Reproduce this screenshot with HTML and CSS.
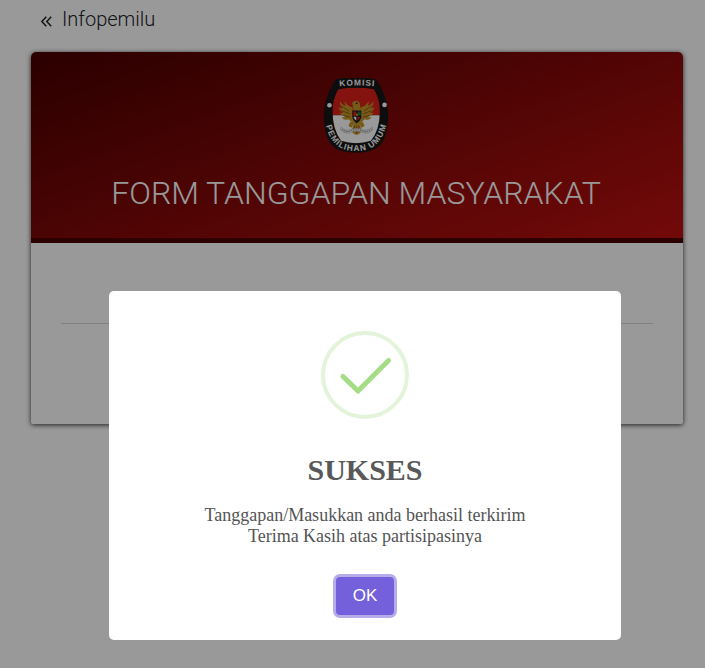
FILE: index.html
```html
<!DOCTYPE html>
<html lang="id">
<head>
<meta charset="utf-8">
<meta name="viewport" content="width=device-width, initial-scale=1">
<title>Form Tanggapan Masyarakat</title>
<link rel="stylesheet" href="styles.css">
</head>
<body>
<div class="page">
  <nav class="topbar">
    <a class="back" href="#">
      <svg class="back-icon" viewBox="0 0 11 11" aria-hidden="true"><path d="M5.3.8.9 5.5l4.4 4.7M10.2.8 5.8 5.5l4.4 4.7"/></svg>
      <span>Infopemilu</span>
    </a>
  </nav>
  <main class="card">
    <header class="card-header">
      <svg class="logo" viewBox="38 24 196 226" role="img" aria-label="Komisi Pemilihan Umum">
        <defs>
          <path id="arc-top" d="M70 51Q138 42 210 51"/>
          <path id="arc-bottom" d="M41 146C52 214 80 244 136 244S220 214 233 142"/>
          <clipPath id="shield"><path d="M83 58Q136 49 190 58Q208 88 208 125Q208 180 181 213Q136 228 91 213Q66 180 65 125Q65 88 83 58Z"/></clipPath>
        </defs>
        <path class="ink" d="M82 26Q136 20 190 26Q199 28 205 40Q234 92 233 142Q231 207 203 232Q181 249 136 249T69 232Q41 207 39 142Q38 92 67 40Q73 28 82 26Z"/>
        <g clip-path="url(#shield)">
          <path class="red" d="M60 45h155v91H60z"/>
          <path class="white" d="M60 136h155v95H60z"/>
        </g>
        <circle class="white" cx="56" cy="106" r="7"/>
        <circle class="white" cx="222" cy="105" r="7"/>
        <g class="gold">
          <path d="M126 113Q109 108 102 94Q101 103 105 109Q94 105 87 94Q87 107 95 116Q88 117 84 111Q87 126 98 128Q91 131 87 127Q92 140 104 139Q98 144 93 142Q101 154 113 148L126 158Z"/>
          <path d="M150 113Q167 108 174 94Q175 103 171 109Q182 105 189 94Q189 107 181 116Q188 117 192 111Q189 126 178 128Q185 131 189 127Q184 140 172 139Q178 144 183 142Q175 154 163 148L150 158Z"/>
          <path d="M128 120Q127 105 124 100Q128 92 139 93Q149 95 148 106L151 121L153 151L147 164L154 183L146 192L138 196L129 192L121 183L129 165L122 151Z"/>
          <path d="M119 155L113 169L123 174L130 160ZM156 155L162 169L152 174L145 160Z"/>
        </g>
        <path class="feather" d="M91 107L115 124M91 122L117 132M98 137L118 142M184 107L160 124M184 122L158 132M177 137L157 142M132 168L128 187M138 169V191M144 168L148 187"/>
        <path class="ink" d="M125 122H152V144Q148 155 138 160Q128 153 125 144Z"/>
        <path class="red" d="M128 125H137V138H128ZM140 141H149Q146 151 140 153Z"/>
        <path class="green" d="M141 125H150V137H141Z"/>
        <path class="white" d="M128 141H137V153Q130 148 128 141Z"/>
        <path class="gold" d="M135 134L139 130L143 134L139 140Z"/>
        <path class="ink" d="M133 99L142 98L139 103Z"/>
        <path class="ribbon" d="M92 172Q106 187 123 178Q138 173 153 178Q170 187 184 172L187 180Q171 196 153 187Q138 182 123 187Q106 196 89 180Z"/>
        <path class="motto" d="M94 179Q108 190 123 182Q138 178 153 182Q168 190 183 179"/>
        <text class="logo-text" text-anchor="middle"><textPath href="#arc-top" startOffset="50%">KOMISI</textPath></text>
        <text class="logo-text" text-anchor="middle"><textPath href="#arc-bottom" startOffset="50%">PEMILIHAN UMUM</textPath></text>
      </svg>
      <h1>FORM TANGGAPAN MASYARAKAT</h1>
    </header>
    <div class="card-body"><hr></div>
  </main>
</div>
<div class="overlay">
  <section class="modal" role="dialog" aria-modal="true" aria-labelledby="modal-title">
    <svg class="success" viewBox="0 0 88 88" aria-hidden="true">
      <circle cx="44" cy="44" r="42"/>
      <path d="M22 45.500 37 60 67.500 29.500"/>
    </svg>
    <h2 id="modal-title">SUKSES</h2>
    <p>Tanggapan/Masukkan anda berhasil terkirim<br>Terima Kasih atas partisipasinya</p>
    <button class="ok" type="button">OK</button>
  </section>
</div>
</body>
</html>
```
FILE: styles.css
```css
* {
  box-sizing: border-box;
}

body {
  margin: 0;
  background: #fff;
  font-family: Roboto, "Liberation Sans", sans-serif;
  color: #212529;
}

h1, h2, p {
  margin: 0;
}

.page {
  min-height: 100vh;
  padding: 0 22px 0 31px;
}

.topbar {
  height: 52px;
  padding: 4px 10px;
}

.back {
  display: inline-flex;
  align-items: center;
  gap: 10px;
  color: #212529;
  font-size: 20px;
  font-weight: 300;
  line-height: 30px;
  text-decoration: none;
}

.back-icon {
  width: 11px;
  height: 11px;
  margin-top: 5px;
  fill: none;
  stroke: currentColor;
  stroke-width: 1.5;
}

.card {
  border-radius: 5px 5px 2px 2px;
  background: #fff;
  box-shadow: 0 1px 5px rgba(0, 0, 0, 0.8);
}

.card-header {
  display: flex;
  flex-direction: column;
  align-items: center;
  gap: 20px;
  padding: 26px 17px 25px 15px;
  border-bottom: 5px solid #4c0000;
  border-radius: 5px 5px 0 0;
  background: linear-gradient(160deg, #480000, #c01010);
  color: #fff;
}

.card-header h1 {
  font-size: 32px;
  font-weight: 300;
  line-height: 40px;
  text-align: center;
}

.logo {
  width: 66px;
  height: 75px;
}

.ink { fill: #171717; }
.red { fill: #dc2019; }
.white { fill: #fff; }
.gold { fill: #c4962a; }
.green { fill: #16764a; }

.feather {
  fill: none;
  stroke: #8c5c12;
  stroke-width: 3;
}

.ribbon {
  fill: #eee;
  stroke: #888;
  stroke-width: 1;
}

.motto {
  fill: none;
  stroke: #555;
  stroke-width: 2;
  stroke-dasharray: 4 3;
}

.logo-text {
  fill: #fff;
  font-family: "Liberation Sans", sans-serif;
  font-size: 25px;
  font-weight: 700;
  letter-spacing: 3px;
}

.card-body {
  padding: 80px 30px 100px;
}

.card-body hr {
  margin: 0;
  border: 0;
  border-top: 1px solid #d5d8dc;
}

.overlay {
  position: fixed;
  inset: 0;
  display: flex;
  align-items: flex-start;
  justify-content: center;
  padding: 291px 0 10px 25px;
  overflow: auto;
  background: rgba(0, 0, 0, 0.4);
}

.modal {
  display: flex;
  flex-direction: column;
  align-items: center;
  width: 100%;
  max-width: 512px;
  padding: 40px 20px 25px;
  border-radius: 5px;
  background: #fff;
  color: #545454;
  font-family: "Liberation Serif", serif;
  text-align: center;
}

.success {
  width: 88px;
  height: 88px;
  fill: none;
}

.success circle {
  stroke: #e4f4db;
  stroke-width: 4;
}

.success path {
  stroke: #a5dc86;
  stroke-width: 5;
  stroke-linecap: round;
  stroke-linejoin: round;
}

.modal h2 {
  margin-top: 33px;
  color: #595959;
  font-size: 30px;
  line-height: 36px;
}

.modal p {
  margin-top: 17px;
  font-size: 18px;
  line-height: 21px;
}

.ok {
  margin-top: 30px;
  width: 58px;
  height: 38px;
  padding: 0;
  border: 0;
  border-radius: 4px;
  background: #7460da;
  box-shadow: 0 0 0 3px #b7abec;
  color: #fff;
  font-family: "Liberation Sans", sans-serif;
  font-size: 17px;
  cursor: pointer;
}
```
